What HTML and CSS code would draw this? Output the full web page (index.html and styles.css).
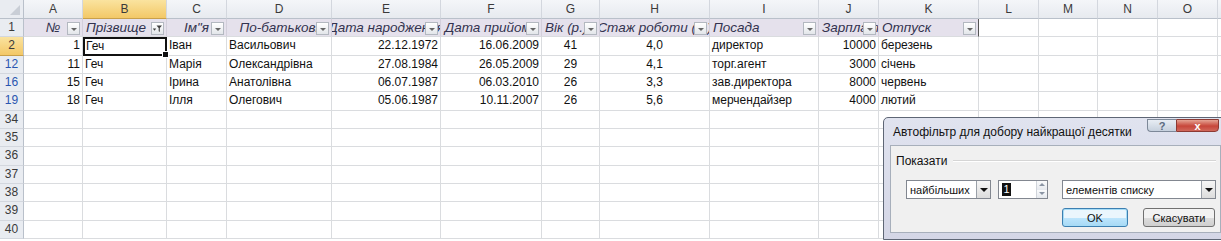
FILE: index.html
```html
<!DOCTYPE html>
<html lang="uk">
<head>
    <meta charset="UTF-8">
    <title>Автофільтр</title>
    <link rel="stylesheet" href="styles.css">
</head>
<body>
<div class="sheet">
    <div class="corner"><i></i></div>
    <div class="col">A</div><div class="col sel">B</div><div class="col">C</div><div class="col">D</div><div class="col">E</div><div class="col">F</div><div class="col">G</div><div class="col">H</div><div class="col">I</div><div class="col">J</div><div class="col">K</div><div class="col">L</div><div class="col">M</div><div class="col">N</div><div class="col">O</div><div class="col"></div>

    <div class="row">1</div>
    <div class="h ac"><span class="t">№</span><span class="fb"></span></div>
    <div class="h"><span class="t">Прізвище</span><span class="fb on"><svg width="11" height="11" viewBox="0 0 11 11"><path d="M4.5 2.5h5.5l-2.2 2.6v4l-1.1-0.8V5.1z" fill="#3f3f3f"/><path d="M0.8 5.5h3.4l-1.7 2.2z" fill="#3f3f3f"/></svg></span></div>
    <div class="h ac"><span class="t">Ім"я</span><span class="fb"></span></div>
    <div class="h ac"><span class="t">По-батькові</span><span class="fb"></span></div>
    <div class="h ac"><span class="t">Дата народження</span><span class="fb"></span></div>
    <div class="h ac"><span class="t">Дата прийому</span><span class="fb"></span></div>
    <div class="h"><span class="t">Вік (р.)</span><span class="fb"></span></div>
    <div class="h ac"><span class="t">Стаж роботи (р.)</span><span class="fb"></span></div>
    <div class="h"><span class="t">Посада</span><span class="fb"></span></div>
    <div class="h"><span class="t">Зарплата</span><span class="fb"></span></div>
    <div class="h last"><span class="t">Отпуск</span><span class="fb"></span></div>
    <div class="c"></div><div class="c"></div><div class="c"></div><div class="c"></div><div class="c"></div>

    <div class="row sel">2</div>
    <div class="c r">1</div><div class="c active">Геч<i></i></div><div class="c">Іван</div><div class="c">Васильович</div><div class="c r">22.12.1972</div><div class="c r">16.06.2009</div><div class="c m">41</div><div class="c m">4,0</div><div class="c">директор</div><div class="c r">10000</div><div class="c">березень</div>
    <div class="c"></div><div class="c"></div><div class="c"></div><div class="c"></div><div class="c"></div>

    <div class="row f">12</div>
    <div class="c r">11</div><div class="c">Геч</div><div class="c">Марія</div><div class="c">Олександрівна</div><div class="c r">27.08.1984</div><div class="c r">26.05.2009</div><div class="c m">29</div><div class="c m">4,1</div><div class="c">торг.агент</div><div class="c r">3000</div><div class="c">січень</div>
    <div class="c"></div><div class="c"></div><div class="c"></div><div class="c"></div><div class="c"></div>

    <div class="row f">16</div>
    <div class="c r">15</div><div class="c">Геч</div><div class="c">Ірина</div><div class="c">Анатолівна</div><div class="c r">06.07.1987</div><div class="c r">06.03.2010</div><div class="c m">26</div><div class="c m">3,3</div><div class="c">зав.директора</div><div class="c r">8000</div><div class="c">червень</div>
    <div class="c"></div><div class="c"></div><div class="c"></div><div class="c"></div><div class="c"></div>

    <div class="row f">19</div>
    <div class="c r">18</div><div class="c">Геч</div><div class="c">Ілля</div><div class="c">Олегович</div><div class="c r">05.06.1987</div><div class="c r">10.11.2007</div><div class="c m">26</div><div class="c m">5,6</div><div class="c">мерчендайзер</div><div class="c r">4000</div><div class="c">лютий</div>
    <div class="c"></div><div class="c"></div><div class="c"></div><div class="c"></div><div class="c"></div>

    <div class="row">34</div>
    <div class="c"></div><div class="c"></div><div class="c"></div><div class="c"></div><div class="c"></div><div class="c"></div><div class="c"></div><div class="c"></div><div class="c"></div><div class="c"></div><div class="c"></div><div class="c"></div><div class="c"></div><div class="c"></div><div class="c"></div><div class="c"></div>
    <div class="row">35</div>
    <div class="c"></div><div class="c"></div><div class="c"></div><div class="c"></div><div class="c"></div><div class="c"></div><div class="c"></div><div class="c"></div><div class="c"></div><div class="c"></div><div class="c"></div><div class="c"></div><div class="c"></div><div class="c"></div><div class="c"></div><div class="c"></div>
    <div class="row">36</div>
    <div class="c"></div><div class="c"></div><div class="c"></div><div class="c"></div><div class="c"></div><div class="c"></div><div class="c"></div><div class="c"></div><div class="c"></div><div class="c"></div><div class="c"></div><div class="c"></div><div class="c"></div><div class="c"></div><div class="c"></div><div class="c"></div>
    <div class="row">37</div>
    <div class="c"></div><div class="c"></div><div class="c"></div><div class="c"></div><div class="c"></div><div class="c"></div><div class="c"></div><div class="c"></div><div class="c"></div><div class="c"></div><div class="c"></div><div class="c"></div><div class="c"></div><div class="c"></div><div class="c"></div><div class="c"></div>
    <div class="row">38</div>
    <div class="c"></div><div class="c"></div><div class="c"></div><div class="c"></div><div class="c"></div><div class="c"></div><div class="c"></div><div class="c"></div><div class="c"></div><div class="c"></div><div class="c"></div><div class="c"></div><div class="c"></div><div class="c"></div><div class="c"></div><div class="c"></div>
    <div class="row">39</div>
    <div class="c"></div><div class="c"></div><div class="c"></div><div class="c"></div><div class="c"></div><div class="c"></div><div class="c"></div><div class="c"></div><div class="c"></div><div class="c"></div><div class="c"></div><div class="c"></div><div class="c"></div><div class="c"></div><div class="c"></div><div class="c"></div>
    <div class="row">40</div>
    <div class="c"></div><div class="c"></div><div class="c"></div><div class="c"></div><div class="c"></div><div class="c"></div><div class="c"></div><div class="c"></div><div class="c"></div><div class="c"></div><div class="c"></div><div class="c"></div><div class="c"></div><div class="c"></div><div class="c"></div><div class="c"></div>
</div>

<div class="dlg">
    <div class="dlg-title">
        <span>Автофільтр для добору найкращої десятки</span>
        <div class="tb">
            <span class="help">?</span>
            <span class="close">x</span>
        </div>
    </div>
    <div class="dlg-body">
        <div class="grp"><span>Показати</span><i></i></div>
        <div class="ctrls">
            <div class="combo small"><span>найбільших</span><b class="drop"></b></div>
            <div class="spin"><span class="caret">1</span><b class="arrows"><i class="up"></i><i class="down"></i></b></div>
            <div class="combo wide"><span>елементів списку</span><b class="drop"></b></div>
        </div>
        <div class="btns">
            <button class="btn ok">OK</button>
            <button class="btn">Скасувати</button>
        </div>
    </div>
</div>
</body>
</html>
```

FILE: styles.css
```css
body {
    margin: 0;
    font-family: "Liberation Sans", Arial, sans-serif;
    font-size: 12px;
    color: #111;
    background: #fff;
    overflow: hidden;
    position: relative;
    height: 241px;
}
.sheet {
    display: grid;
    grid-template-columns: 24px 59px 84px 60px 105px 109px 101px 58px 110px 109px 60px 100px 60px 59px 60px 60px 20px;
    grid-template-rows: 19px;
    grid-auto-rows: 18.33px;
    width: 1238px;
}
.sheet > div {
    box-sizing: border-box;
    white-space: nowrap;
    overflow: hidden;
}
.corner {
    background: #e9ecf1;
    border-right: 1px solid #b9c0ca;
    border-bottom: 1px solid #b9c0ca;
    position: relative;
}
.corner i {
    position: absolute;
    right: 3px;
    bottom: 3px;
    width: 0;
    height: 0;
    border-left: 10px solid transparent;
    border-bottom: 10px solid #c9ced6;
}
.col {
    background: linear-gradient(#f4f6f9, #e7eaef);
    border-right: 1px solid #d3d7de;
    border-bottom: 1px solid #b9c0ca;
    text-align: center;
    line-height: 18px;
    color: #3a3a3a;
    font-size: 12px;
}
.col.sel, .row.sel {
    background: linear-gradient(#fae39f, #f3c867);
    border-bottom-color: #c9a04a;
}
.row {
    background: #e9ecf1;
    border-right: 1px solid #b9c0ca;
    border-bottom: 1px solid #d3d7de;
    text-align: center;
    line-height: 17px;
    color: #3a3a3a;
}
.row.f {
    color: #2a56b0;
}
.c {
    border-right: 1px solid #dadcdf;
    border-bottom: 1px solid #dadcdf;
    line-height: 17px;
    padding: 0 2px;
}
.c.r { text-align: right; }
.c.m { text-align: center; }
.c.active {
    border: 2px solid #111;
    line-height: 15px;
    padding: 0 1px;
    position: relative;
    overflow: visible !important;
}
.c.active i {
    position: absolute;
    right: -4px;
    bottom: -4px;
    width: 5px;
    height: 5px;
    background: #111;
    border: 1px solid #fff;
}
.h {
    background: #e5e1ec;
    border-right: 1px solid #d3cfdb;
    border-bottom: 1px solid #dadcdf;
    position: relative;
    display: flex;
    align-items: center;
    font-style: italic;
    font-size: 13.5px;
    color: #33334f;
    padding-left: 3px;
}
.h.ac {
    justify-content: center;
    padding-left: 0;
}
.h.last {
    border-right: 1px solid #555;
}
.fb {
    position: absolute;
    right: 2px;
    top: 3px;
    width: 11px;
    height: 11px;
    border: 1px solid #b3b8c0;
    background: linear-gradient(#ffffff, #e3e6ea);
}
.fb::after {
    content: "";
    position: absolute;
    left: 3px;
    top: 5px;
    border-left: 3px solid transparent;
    border-right: 3px solid transparent;
    border-top: 3px solid #666;
}
.fb.on::after {
    display: none;
}
.fb svg {
    display: block;
}

/* dialog */
.dlg {
    position: absolute;
    left: 883px;
    top: 117px;
    width: 345px;
    height: 123px;
    box-sizing: border-box;
    border: 1px solid #5e6675;
    border-radius: 5px 5px 0 0;
    background: linear-gradient(#e0e3ef, #d4d6e6);
    padding: 0 6px 6px;
    display: flex;
    flex-direction: column;
}
.dlg-title {
    height: 27px;
    display: flex;
    align-items: center;
    justify-content: space-between;
    padding-left: 3px;
    font-size: 12px;
    color: #111;
}
.tb {
    display: flex;
    align-self: flex-start;
    margin-right: 2px;
    margin-top: 1px;
}
.tb span {
    height: 13px;
    box-sizing: border-box;
    display: flex;
    align-items: center;
    justify-content: center;
    font-weight: bold;
    font-size: 11px;
    border: 1px solid #7d8898;
}
.help {
    width: 29px;
    background: linear-gradient(#e8edf4, #c6d0dd);
    color: #5a6a80;
    border-radius: 0 0 0 4px;
    border-right: none !important;
}
.close {
    width: 43px;
    background: linear-gradient(#e5a494, #c7463a 55%, #d0685b);
    color: #fff;
    border-color: #8c3a33 !important;
    border-radius: 0 0 4px 0;
}
.dlg-body {
    flex: 1;
    background: #f0f0f0;
    border: 1px solid #a7afbb;
    padding: 0 4px 0 5px;
    display: flex;
    flex-direction: column;
}
.grp {
    display: flex;
    align-items: center;
    gap: 6px;
    height: 14px;
    margin-top: 8px;
}
.grp i {
    flex: 1;
    height: 0;
    border-top: 1px solid #d5d5d5;
    border-bottom: 1px solid #fff;
}
.ctrls {
    display: flex;
    margin-top: 12px;
    padding-left: 10px;
    height: 19px;
}
.combo, .spin {
    box-sizing: border-box;
    height: 19px;
    border: 1px solid #828790;
    background: #fff;
    display: flex;
    align-items: center;
    padding-left: 3px;
    font-size: 11px;
}
.combo span, .spin span {
    flex: 1;
}
.combo.small { width: 86px; }
.combo.wide { width: 155px; margin-left: 14px; }
.spin { width: 50px; margin-left: 7px; }
.drop {
    width: 14px;
    height: 17px;
    box-sizing: border-box;
    border-left: 1px solid #9aa0a8;
    background: linear-gradient(#f6f6f6, #dcdcdc);
    position: relative;
}
.drop::after {
    content: "";
    position: absolute;
    left: 3px;
    top: 7px;
    border-left: 4px solid transparent;
    border-right: 4px solid transparent;
    border-top: 4px solid #111;
}
.caret {
    flex: none !important;
    background: #111;
    color: #fff;
    padding: 0 1px;
    margin-right: auto;
    line-height: 13px;
}
.arrows {
    width: 10px;
    height: 17px;
    display: flex;
    flex-direction: column;
    border-left: 1px solid #d0d4da;
}
.arrows i {
    flex: 1;
    position: relative;
    background: linear-gradient(#fafbfc, #e6e9ee);
}
.arrows i::after {
    content: "";
    position: absolute;
    left: 2px;
    top: 2px;
    border-left: 3px solid transparent;
    border-right: 3px solid transparent;
}
.arrows .up::after { border-bottom: 3px solid #8a94a3; }
.arrows .down::after { border-top: 3px solid #8a94a3; }
.btns {
    display: flex;
    justify-content: flex-end;
    gap: 15px;
    margin-top: 9px;
    padding-right: 1px;
}
.btn {
    height: 19px;
    padding: 0;
    font-family: "Liberation Sans", Arial, sans-serif;
    font-size: 11px;
    color: #111;
    border: 1px solid #707070;
    border-radius: 3px;
    background: linear-gradient(#f2f2f2 50%, #dddddd 50%, #cfcfcf);
    width: 72px;
}
.btn.ok {
    width: 66px;
    border-color: #3c7fb1;
    box-shadow: inset 0 0 0 1px #a6dcf6;
    background: linear-gradient(#eaf6fd 50%, #bee6fd 50%, #a7d9f5);
}
```
